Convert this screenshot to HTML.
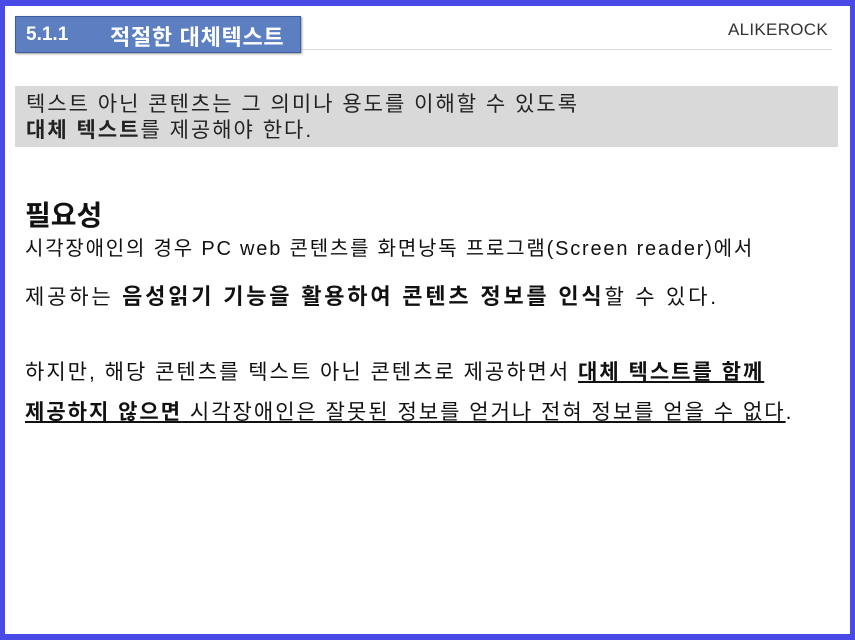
<!DOCTYPE html>
<html><head><meta charset="utf-8"><style>
html,body{margin:0;padding:0}
body{width:855px;height:640px;position:relative;overflow:hidden;background:#4a4ae6;font-family:"Liberation Sans","Noto Sans CJK KR",sans-serif}
.page{position:absolute;left:5px;top:6px;right:5px;bottom:6px;background:#fff}
.t{position:absolute;white-space:nowrap;color:#111}
.b{font-size:20px}
</style></head><body>
<div class="page"></div>
<div style="position:absolute;left:300px;top:49px;width:532px;height:1px;background:#dcdce4"></div>
<div style="position:absolute;left:15px;top:16px;width:284px;height:35px;background:#5b7fc0;border:1px solid #3c5e9c;box-shadow:1px 1px 2px #999"></div>
<div class="t" style="left:26px;top:24px;font-size:19px;color:#fff;font-weight:bold">5.1.1</div>
<div class="t" style="left:110px;top:20px;font-size:22px;color:#fff;font-weight:bold;letter-spacing:0.7px">적절한 대체텍스트</div>
<div class="t" style="left:728px;top:20px;font-size:17px;color:#333;letter-spacing:0.3px">ALIKEROCK</div>
<div style="position:absolute;left:15px;top:86px;width:823px;height:61px;background:#d9d9d9"></div>
<div class="t" style="left:26px;top:92px;font-size:21px;letter-spacing:2.0px;line-height:26px;color:#222">텍스트 아닌 콘텐츠는 그 의미나 용도를 이해할 수 있도록<br><b>대체 텍스트</b>를 제공해야 한다.</div>
<div class="t" style="left:25px;top:194px;font-size:28px;font-weight:bold">필요성</div>
<div class="t b" style="left:25px;top:232px;letter-spacing:1.8px">시각장애인의 경우 PC web 콘텐츠를 화면낭독 프로그램(Screen reader)에서</div>
<div class="t b" style="left:25px;top:279px;letter-spacing:2.8px;font-size:21px">제공하는 <b style="font-size:22px">음성읽기 기능을 활용하여 콘텐츠 정보를 인식</b>할 수 있다.</div>
<div class="t b" style="left:25px;top:356px;letter-spacing:2.0px;font-size:21px">하지만, 해당 콘텐츠를 텍스트 아닌 콘텐츠로 제공하면서 <b><u>대체 텍스트를 함께</u></b></div>
<div class="t b" style="left:25px;top:396px;letter-spacing:2.0px;font-size:21px"><u><b>제공하지 않으면</b> 시각장애인은 잘못된 정보를 얻거나 전혀 정보를 얻을 수 없다</u>.</div>
</body></html>
